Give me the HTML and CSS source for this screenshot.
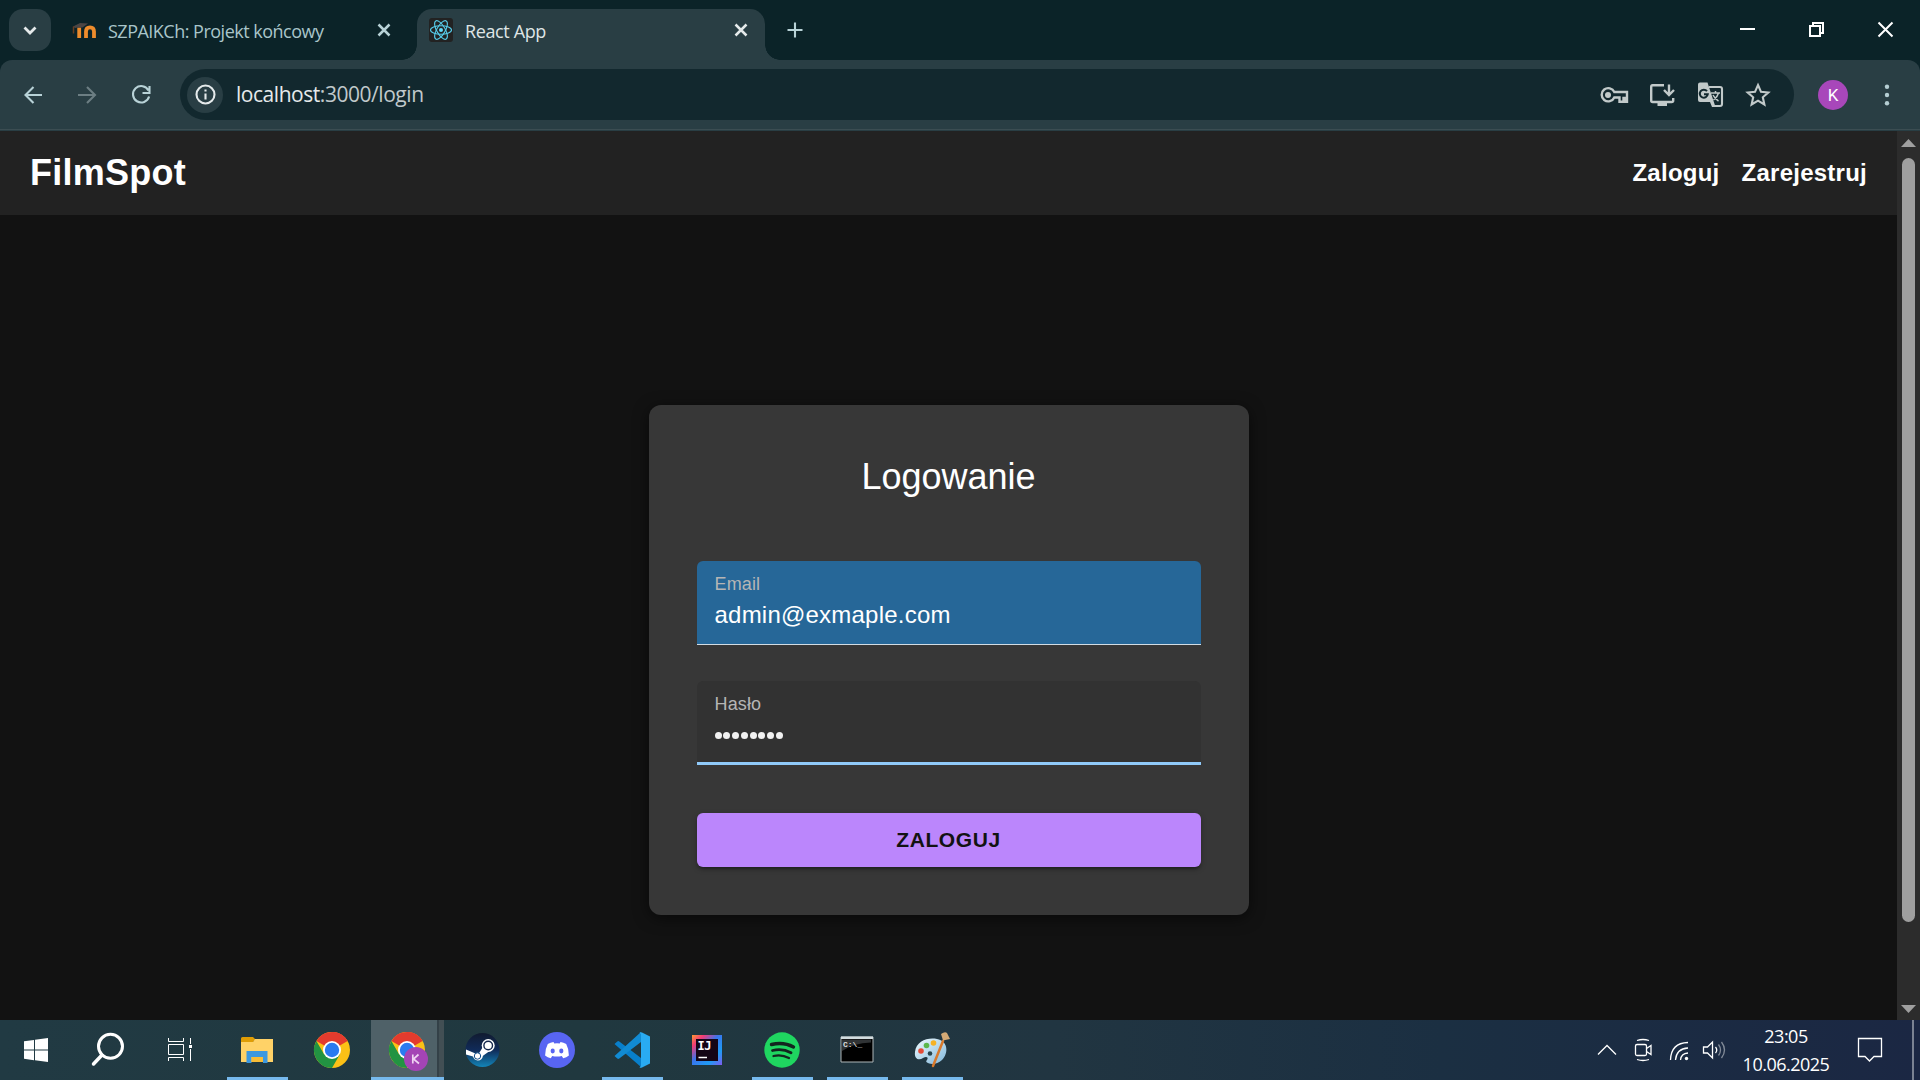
FILE: index.html
```html
<!DOCTYPE html>
<html lang="pl">
<head>
<meta charset="utf-8">
<title>React App</title>
<link rel="stylesheet" href="styles.css">
</head>
<body>
<div class="screen">
  <div class="tabstrip">
    <button class="tab-search" aria-label="Tabs"><svg width="42" height="42" viewBox="0 0 42 42"><path d="M15.500 18.500l5.500 5.500 5.500-5.500" class="stroke s3 bright"/></svg></button>
    <div class="tab tab-idle">
      <svg class="favicon" width="24" height="24" viewBox="0 0 24 24"><path d="M7.200 20V9.500M14 20v-6.500Q14 9.300 18 9.300t4 4.200V20" fill="none" stroke="#ee8c2c" stroke-width="3.800"/><path d="M1 8.500L8 5l8 .5-5.500 4L6 9.500 3 10z" fill="#4b4544"/><path d="M1.500 8.500v7" stroke="#6b3d1e" stroke-width="1.500"/></svg>
      <span class="tab-title title-first">SZPAIKCh: Projekt końcowy</span>
      <svg width="24" height="24" viewBox="0 0 24 24"><path d="M6.500 6.500l11 11M17.500 6.500l-11 11" class="stroke s25 pale"/></svg>
    </div>
    <div class="tab tab-active">
      <svg class="favicon" width="24" height="24" viewBox="0 0 24 24"><rect width="24" height="24" rx="3" fill="#222"/><g fill="none" stroke="#57cdeb" stroke-width="1.100"><ellipse cx="12" cy="12" rx="10.500" ry="4.200"/><ellipse cx="12" cy="12" rx="10.500" ry="4.200" transform="rotate(60 12 12)"/><ellipse cx="12" cy="12" rx="10.500" ry="4.200" transform="rotate(120 12 12)"/></g><circle cx="12" cy="12" r="2" fill="#61dafb"/></svg>
      <span class="tab-title title-second">React App</span>
      <svg width="24" height="24" viewBox="0 0 24 24"><path d="M6.500 6.500l11 11M17.500 6.500l-11 11" class="stroke s25 bright"/></svg>
    </div>
    <svg class="new-tab" width="42" height="42" viewBox="0 0 42 42"><path d="M21 13.500v15M13.500 21h15" class="stroke s2 pale"/></svg>
    <div class="window-controls">
      <svg width="69" height="58" viewBox="0 0 69 58"><path d="M28 29h15" stroke="#fff" stroke-width="2"/></svg>
      <svg width="70" height="58" viewBox="0 0 70 58"><path d="M29 26h10v10H29zM32 25v-2h10v10h-2" fill="none" stroke="#fff" stroke-width="2"/></svg>
      <svg width="69" height="58" viewBox="0 0 69 58"><path d="M27.500 22.500l14 14M41.500 22.500l-14 14" stroke="#fff" stroke-width="2"/></svg>
    </div>
  </div>

  <div class="toolbar">
    <div class="nav-buttons">
      <svg width="54" height="54" viewBox="0 0 54 54"><path d="M36 27H19.500M27.500 19l-8 8 8 8" class="stroke s2 pale"/></svg>
      <svg width="54" height="54" viewBox="0 0 54 54"><path d="M18 27h16.500M27 19l8 8-8 8" class="stroke s2 dim"/></svg>
      <svg width="54" height="54" viewBox="0 0 54 54"><path d="M34.500 22.500A8.200 8.200 0 1 0 35.100 28.500M35.500 18v7H28.500" class="stroke s2 pale"/></svg>
    </div>
    <div class="omnibox">
      <span class="site-info"><svg width="36" height="36" viewBox="0 0 36 36"><circle cx="18.500" cy="17.500" r="9" class="stroke s2 bright"/><path d="M18.500 16.500v6M18.500 12.500v2" class="stroke s2 bright"/></svg></span>
      <span class="url"><b>localhost</b>:3000/login</span>
      <div class="page-actions">
        <svg width="48" height="48" viewBox="0 0 48 48"><path d="M24.300 21A6.600 6.600 0 1 0 24.300 26.500H29.500v4.200h4V27h2v3.700H37V21z" class="stroke s24 icon"/><circle cx="18" cy="24" r="3" class="fill-icon"/></svg>
        <svg width="48" height="48" viewBox="0 0 48 48"><path d="M26 14.300H14.500Q13.200 14.300 13.200 16v13.500q0 1.500 1.500 1.500h19q1.500 0 1.500-1.500V27M31 13.500v10.500M26 19l5 5 5-5" class="stroke s24 icon"/><path d="M19.500 31h9.500v4h-9.500z" class="fill-icon"/></svg>
        <svg width="48" height="48" viewBox="0 0 48 48"><path d="M23 16h11q2 0 2 2v15q0 2-2 2H26" class="stroke s2 icon"/><path d="M14 11.500h7.500l8 24.500H26l-2-5H14q-2 0-2-2V13.500q0-2 2-2z" class="fill-icon"/><path d="M21 20.200a4 4 0 1 0 .8 3H18" fill="none" stroke="#12282e" stroke-width="2"/><path d="M25 22h9M29.500 20v2M32.500 22q-1 4-5 7M27 24q2 4 5.500 6" fill="none" stroke="#c2caca" stroke-width="1.500"/></svg>
        <svg width="48" height="48" viewBox="0 0 48 48"><path d="M24 14l3 6.800 7.300.7-5.500 4.800 1.600 7.200-6.400-3.800-6.400 3.800 1.600-7.200-5.500-4.800 7.300-.7z" class="stroke s2 icon miter"/></svg>
      </div>
    </div>
    <span class="avatar">K</span>
    <svg class="menu" width="24" height="36" viewBox="0 0 24 36"><g fill="#b5ced3"><circle cx="12" cy="9.700" r="2.200"/><circle cx="12" cy="18" r="2.200"/><circle cx="12" cy="26.300" r="2.200"/></g></svg>
  </div>

  <div class="viewport">
    <div class="page">
      <header class="site-header">
        <a class="brand">FilmSpot</a>
        <nav class="site-nav"><a>Zaloguj</a><a>Zarejestruj</a></nav>
      </header>
      <main class="content">
        <form class="card">
          <h1>Logowanie</h1>
          <div class="field autofilled"><label>Email</label><span class="value">admin@exmaple.com</span></div>
          <div class="field focused"><label>Hasło</label><span class="dots"><i></i><i></i><i></i><i></i><i></i><i></i><i></i><i></i></span></div>
          <button type="button" class="submit">ZALOGUJ</button>
        </form>
      </main>
    </div>
    <div class="scrollbar">
      <svg width="15" height="8" viewBox="0 0 15 8"><path d="M0 8L7.500 0 15 8z" fill="#9f9f9f"/></svg>
      <div class="thumb"></div>
      <svg width="15" height="8" viewBox="0 0 15 8"><path d="M0 0h15L7.500 8z" fill="#9f9f9f"/></svg>
    </div>
  </div>

  <div class="taskbar">
    <div class="sys">
      <svg width="36" height="36" viewBox="0 0 36 36"><path d="M6 9.300l10-1.400V17.500H6zM17 7.700L30 6v11.500H17zM6 18.500h10v9.700L6 26.800zM17 18.500h13V30l-13-1.700z" fill="#fff"/></svg>
      <svg width="36" height="36" viewBox="0 0 36 36"><circle cx="20.500" cy="14.300" r="12" fill="none" stroke="#fff" stroke-width="3"/><path d="M12 23l-8.500 9" stroke="#fff" stroke-width="3.500" stroke-linecap="round"/></svg>
      <svg width="36" height="36" viewBox="0 0 36 36"><path d="M6.500 6v3.500h15V6M6.500 12.500h15v10h-15zM6.500 29v-3.500h15V29M28.500 6v6M28.500 17v12" fill="none" stroke="#fff"/><path d="M27 13h3v3h-3z" fill="#fff"/></svg>
    </div>
    <div class="apps">
      <div class="app running"><svg width="36" height="36" viewBox="0 0 36 36"><path d="M2 6.500q0-1.500 1.500-1.500H14l2.500 2.500L14 10H2z" fill="#df9d05"/><path d="M2 10h12l2-3h18v23H2z" fill="#ffd267"/><path d="M7.500 19h21v12H24v-6H12.500v6h-5z" fill="#3c98df"/><path d="M12.500 25H24v5H12.500z" fill="#f8bd36"/></svg></div>
      <div class="app"><svg width="36" height="36" viewBox="0 0 36 36"><g id="chrome"><circle cx="18" cy="18" r="18" fill="#fbc116"/><path d="M18 18L2.400 9A18 18 0 0 1 33.600 9z" fill="#e33b2e"/><path d="M2.400 9A18 18 0 0 0 18 36l7.800-13.500L18 18 10.200 22.500z" fill="#229342"/><path d="M18 9h15.600q-6-9-15.600-9z" fill="#e33b2e"/><circle cx="18" cy="18" r="9" fill="#fff"/><circle cx="18" cy="18" r="7.200" fill="#2a7af0"/></g></svg></div>
      <div class="app current"><svg width="42" height="42" viewBox="0 0 42 42"><use href="#chrome" x="2" y="3"/><circle cx="29" cy="30" r="12" fill="#a444b5"/><path d="M25.800 25.500v9M31.500 25.500l-5 4.500 5.500 4.500" fill="none" stroke="#efd3f2" stroke-width="1.700"/></svg><span class="stack"></span></div>
      <div class="app"><svg width="36" height="36" viewBox="0 0 36 36"><defs><linearGradient id="steam" x2="0" y2="1"><stop stop-color="#111b30"/><stop offset=".5" stop-color="#102b59"/><stop offset="1" stop-color="#1385b8"/></linearGradient></defs><circle cx="18.500" cy="18" r="17" fill="url(#steam)"/><path d="M2 17.500l10 4.200 3-.5 4-6.500 7 4-7 5q-1 5-5.500 4.700-3.500-.3-4.500-3.900L2 22.500z" fill="#fff"/><circle cx="24.200" cy="13.500" r="6.500" fill="#fff"/><circle cx="24.200" cy="13.500" r="4.300" fill="#fff" stroke="#14264c" stroke-width="1.400"/><circle cx="13.500" cy="24" r="3.200" fill="#fff" stroke="#14508a"/></svg></div>
      <div class="app"><svg width="36" height="36" viewBox="0 0 36 36"><circle cx="18" cy="18" r="18" fill="#5865f2"/><path d="M14.500 10q-3 .3-5.700 2-2.800 5-2.700 11.500 2.500 2 5.700 2.800l1.400-2.300q4.800 1.200 9.600 0l1.400 2.300q3.200-.8 5.700-2.800.1-6.500-2.700-11.500-2.700-1.700-5.700-2l-.8 1.500q-2.700-.4-5.400 0z" fill="#fff"/><ellipse cx="13.700" cy="19" rx="2.100" ry="2.400" fill="#5865f2"/><ellipse cx="22.300" cy="19" rx="2.100" ry="2.400" fill="#5865f2"/></svg></div>
      <div class="app running"><svg width="36" height="36" viewBox="0 0 36 36"><path d="M0.500 12l2.800-2.500q1-.8 2 0L27 26v9z" fill="#087fcb"/><path d="M0.500 24l2.800 2.500q1 .8 2 0L27 10V0z" fill="#118bd3"/><path d="M25.500.7Q26.500-.2 28 .5l8 4v27l-8 4q-1.500.7-2.500-.2L27 34V2z" fill="#29abf2"/></svg></div>
      <div class="app"><svg width="36" height="36" viewBox="0 0 36 36"><defs><linearGradient id="ij" x2="1" y2="1"><stop stop-color="#ff9a32"/><stop offset=".2" stop-color="#f43b76"/><stop offset=".45" stop-color="#3975ed"/><stop offset=".75" stop-color="#1f9bf4"/><stop offset="1" stop-color="#805bef"/></linearGradient></defs><path d="M3 3h30v30H3z" fill="url(#ij)"/><path d="M7 7h22v22H7z" fill="#140515"/><text x="8.500" y="18" class="ij-label">IJ</text><path d="M9.500 25.500H18" stroke="#fff" stroke-width="1.500"/></svg></div>
      <div class="app running"><svg width="36" height="36" viewBox="0 0 36 36"><circle cx="18" cy="18" r="17.700" fill="#1fd660"/><g fill="none" stroke="#13251f" stroke-linecap="round"><path d="M7.500 12.500q12-3 22 2.500" stroke-width="3.400"/><path d="M8.500 18.500q10-2.500 18.500 2.300" stroke-width="2.800"/><path d="M9.500 24q8-2 15.500 2" stroke-width="2.300"/></g></svg></div>
      <div class="app running"><svg width="36" height="36" viewBox="0 0 36 36"><path d="M2 5h32v25H2z" fill="#000" stroke="#aeb6b8"/><path d="M2 4.500h32V7H2z" fill="#d2dcdf"/><path d="M3 7.500h29v3Q14 11 3 19z" fill="#303335"/><text x="4" y="14.500" class="cmd-label">C:\_</text></svg></div>
      <div class="app running"><svg width="36" height="36" viewBox="0 0 36 36"><defs><linearGradient id="palette" x2="1" y2="1"><stop stop-color="#f0fbff"/><stop offset="1" stop-color="#81b7da"/></linearGradient></defs><path d="M1 20C2 9 14 5 23 7c11 2 12 14 5 21-7 7-19 3-15 0 2-3-1-4-4-2-4 3-9 1-8-6z" fill="url(#palette)"/><circle cx="16" cy="21.500" r="2.300" fill="#26434c"/><circle cx="7" cy="19" r="2.800" fill="#e54b37"/><circle cx="12.500" cy="13.500" r="2.800" fill="#5bb84c"/><circle cx="19.500" cy="11" r="2.800" fill="#f6b225"/><path d="M29 9l-10 25" stroke="#d8792c" stroke-width="2.500" stroke-linecap="round"/><path d="M27 2q4-3 6-1l3 6-7 1.500z" fill="#d4aa76"/></svg></div>
    </div>
    <div class="tray">
      <svg width="36" height="36" viewBox="0 0 36 36"><path d="M9 22.500l9-9 9 9" class="tray-line"/></svg>
      <svg width="36" height="36" viewBox="0 0 36 36"><rect x="10.500" y="12.500" width="11" height="11" rx="1.500" class="tray-line"/><path d="M21.500 16.500l4.500-3v9l-4.500-3M12 8.500q6-2 12 0M12 27.500q6 2 12 0" class="tray-line"/></svg>
      <svg width="36" height="36" viewBox="0 0 36 36"><g class="tray-line"><path d="M9.500 28Q10 11 27 10.500M14.500 28q1-11.500 12.500-12M19.500 28q.5-6.500 7.500-7"/></g><circle cx="25.500" cy="26.500" r="1.700" fill="#fff"/></svg>
      <svg width="36" height="36" viewBox="0 0 36 36"><path d="M6.500 15v6h4l5 5V10l-5 5zM18.500 15q2.500 3 0 6" class="tray-line"/><path d="M21.500 12.500q4 5.500 0 11M24.500 10q6 8 0 16" class="tray-line faded"/></svg>
      <div class="clock"><span>23:05</span><span>10.06.2025</span></div>
      <svg class="notice" width="36" height="36" viewBox="0 0 36 36"><path d="M6.500 6.500h23v18h-7.500l-4.500 4.500-4.500-4.500H6.500z" class="tray-line"/></svg>
      <span class="show-desktop"></span>
    </div>
  </div>
</div>
</body>
</html>
```
FILE: styles.css
```css
* { box-sizing: border-box; }
body { margin: 0; background: #121212; font-family: "Liberation Sans", Arial, sans-serif; }
button { border: 0; padding: 0; font: inherit; }
svg { display: block; flex: none; overflow: visible; }
.screen { width: 1920px; height: 1080px; display: flex; flex-direction: column; overflow: hidden; background: #0b2328; }

.stroke { fill: none; stroke-linejoin: miter; }
.s2 { stroke-width: 2.1; }
.s24 { stroke-width: 2.4; }
.s25 { stroke-width: 2.5; }
.s3 { stroke-width: 2.8; }
.pale { stroke: #b8d2d7; }
.bright { stroke: #e5eaeb; }
.dim { stroke: #6c7e83; }
.icon { stroke: #c2caca; }
.fill-icon { fill: #c2caca; }

.tabstrip { height: 60px; display: flex; align-items: flex-start; background: #0b2328; font-family: "Open Sans", "Noto Sans", sans-serif; }
.tab-search { width: 42px; height: 42px; margin: 9px 0 0 9px; border-radius: 14px; background: #293e44; }
.tab { display: flex; align-items: center; height: 51px; margin-top: 9px; padding-bottom: 9px; }
.tab-idle { width: 366px; padding-left: 21px; padding-right: 21px; }
.tab-active { position: relative; width: 348px; padding-left: 12px; padding-right: 12px; background: #293e44; border-radius: 15px 15px 0 0; }
.tab-active::before, .tab-active::after { content: ""; position: absolute; bottom: 0; width: 15px; height: 15px; }
.tab-active::before { left: -15px; background: radial-gradient(circle at 0 0, #0b2328 14.5px, #293e44 15px); }
.tab-active::after { right: -15px; background: radial-gradient(circle at 100% 0, #0b2328 14.5px, #293e44 15px); }
.tab-title { flex: 1; margin-left: 12px; font-size: 18px; line-height: 24px; white-space: nowrap; padding-top: 1px; }
.title-first { color: #a9c5ca; letter-spacing: -0.51px; }
.title-second { color: #dfe5e6; letter-spacing: -0.38px; }
.new-tab { margin: 9px 0 0 9px; }
.window-controls { display: flex; margin-left: auto; }

.toolbar { height: 71px; display: flex; align-items: center; padding-bottom: 2px; background: #293e44; border-radius: 12px 12px 0 0; box-shadow: inset 0 -1px #293e44, inset 0 -2px #3b4d52; }
.nav-buttons { display: flex; width: 180px; padding-left: 6px; }
.omnibox { width: 1614px; height: 51px; display: flex; align-items: center; border-radius: 26px; background: #12282e; padding: 0 12px 0 7px; }
.site-info { width: 36px; height: 36px; border-radius: 50%; background: #293e44; }
.url { flex: 1; margin-left: 13px; color: #c0c9cb; font-family: "Open Sans", "Noto Sans", sans-serif; font-size: 21px; letter-spacing: -0.46px; line-height: 30px; padding-bottom: 1px; }
.url b { color: #e5eaeb; font-weight: 400; }
.page-actions { display: flex; }
.avatar { width: 30px; height: 30px; margin-left: 24px; border-radius: 50%; background: #a847ba; color: #fff; font: 17px/30px Roboto, sans-serif; text-align: center; }
.menu { margin-left: 27px; }

.viewport { height: 889px; display: flex; background: #121212; }
.page { width: 1897px; display: flex; flex-direction: column; }
.site-header { height: 84px; display: flex; align-items: center; justify-content: space-between; padding: 0 30px; background: #222; color: #fff; font-weight: 700; }
.brand { font-size: 36px; line-height: 42px; letter-spacing: .25px; }
.site-nav { display: flex; gap: 22px; font-size: 24px; letter-spacing: .25px; }
.content { display: flex; justify-content: center; padding-top: 190px; }
.card { width: 600px; height: 510px; display: flex; flex-direction: column; padding: 48px; border-radius: 12px; background: #373737; box-shadow: 0 3px 15px rgba(0,0,0,.55); }
h1 { margin: 0 0 60px; height: 48px; color: #fff; font-size: 36px; font-weight: 400; line-height: 48px; text-align: center; }
.field { height: 84px; display: flex; flex-direction: column; padding: 11px 18px 0; border-radius: 6px 6px 0 0; }
.field label { height: 24px; color: #b5b5b5; font-size: 18px; line-height: 24px; letter-spacing: .15px; }
.autofilled { background: #266798; border-bottom: 1px solid #d2dce3; margin-bottom: 36px; }
.autofilled .value { color: #fff; font-size: 24px; line-height: 38px; letter-spacing: .22px; }
.focused { background: #323232; border-bottom: 3px solid #90caf9; margin-bottom: 48px; }
.dots { display: flex; align-items: center; gap: 1.8px; height: 38px; }
.dots i { width: 7px; height: 7px; border-radius: 50%; background: #f1f1f1; }
.submit { height: 54px; flex: none; border-radius: 6px; background: #bb86fc; color: #121212; font-size: 21px; font-weight: 700; letter-spacing: .6px; padding-bottom: 1px; box-shadow: 0 3px 3px -1px rgba(0,0,0,.3), 0 2px 6px rgba(0,0,0,.2); }
.scrollbar { width: 23px; height: 889px; display: flex; flex-direction: column; align-items: center; padding: 8px 0 7px; background: #2c2c2c; }
.thumb { width: 13px; height: 764px; margin: 11px 0 auto; border-radius: 7px; background: #9f9f9f; }

.taskbar { height: 60px; display: flex; background: linear-gradient(90deg, #213a43 0%, #20383f 30%, #213541 55%, #1b2f42 75%, #1b2743 100%); }
.sys { display: flex; align-items: center; width: 220px; padding-left: 18px; gap: 36px; }
.apps { display: flex; }
.app { position: relative; width: 75px; height: 60px; display: flex; align-items: center; justify-content: center; padding-right: 2px; }
.running::after { content: ""; position: absolute; left: 7px; bottom: 0; width: 61px; height: 3px; background: #76b9ed; }
.current { width: 73px; margin: 0 1px; background: #4f6168; border-bottom: 3px solid #76b9ed; padding: 3px 0 0; }
.stack { position: absolute; right: 0; top: 0; width: 7px; height: 57px; background: #424f54; border-left: 2px solid #344148; }
.ij-label { font: 700 12px "DejaVu Sans Mono", monospace; fill: #fff; letter-spacing: -.5px; }
.cmd-label { font: 700 8px "Liberation Mono", monospace; fill: #ddd; }
.tray { display: flex; align-items: center; margin-left: auto; }
.tray-line { fill: none; stroke: #fff; stroke-width: 1.3; }
.faded { opacity: .45; }
.clock { width: 106px; display: flex; flex-direction: column; align-items: center; padding-bottom: 1px; color: #fff; font: 18px/28px "Open Sans", "Noto Sans", sans-serif; letter-spacing: -.5px; }
.notice { margin: 0 13px; }
.show-desktop { width: 8px; height: 60px; margin-left: 11px; border-left: 2px solid #7a8292; }
```
